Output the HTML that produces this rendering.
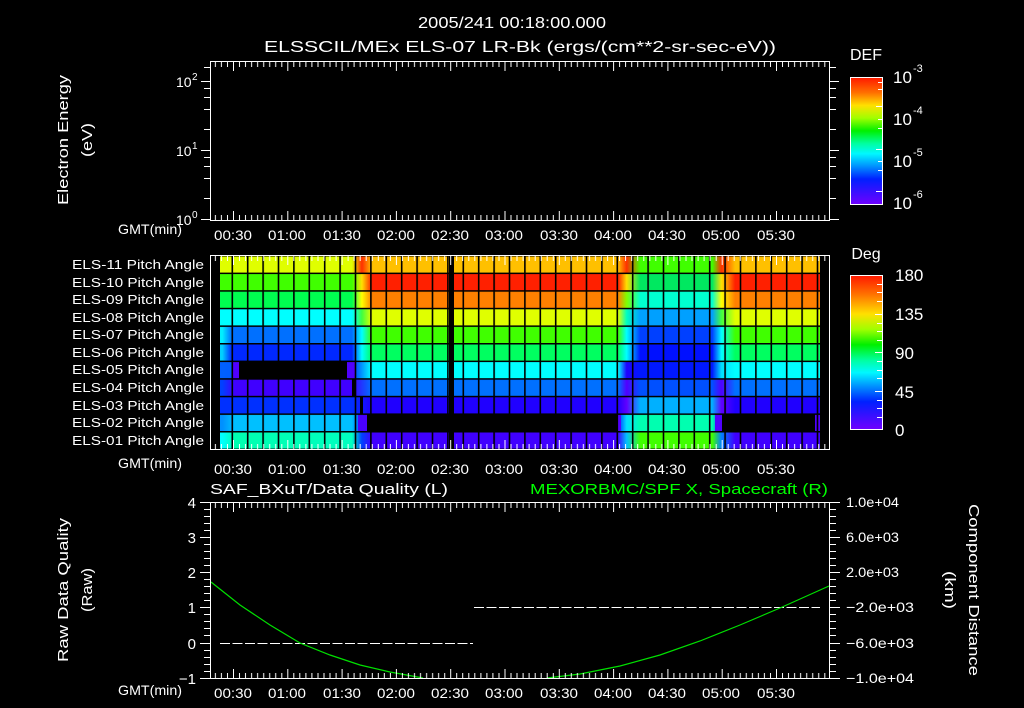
<!DOCTYPE html>
<html><head><meta charset="utf-8"><style>
html,body{margin:0;padding:0;background:#000;width:1024px;height:708px;overflow:hidden}
svg{display:block}
text{font-family:"Liberation Sans",sans-serif;fill:#fff}
</style></head><body>
<svg width="1024" height="708" viewBox="0 0 1024 708" xmlns="http://www.w3.org/2000/svg">
<defs>
<pattern id="tt" x="233" y="0" width="54.3" height="20" patternUnits="userSpaceOnUse">
<g stroke="#fff" stroke-width="1">
<line x1="0.5" y1="0" x2="0.5" y2="9"/>
<line x1="6.5" y1="0" x2="6.5" y2="5"/><line x1="12.5" y1="0" x2="12.5" y2="5"/><line x1="18.6" y1="0" x2="18.6" y2="5"/>
<line x1="24.6" y1="0" x2="24.6" y2="5"/><line x1="30.7" y1="0" x2="30.7" y2="5"/><line x1="36.7" y1="0" x2="36.7" y2="5"/>
<line x1="42.7" y1="0" x2="42.7" y2="5"/><line x1="48.8" y1="0" x2="48.8" y2="5"/>
</g></pattern>
<pattern id="tb" x="233" y="0" width="54.3" height="20" patternUnits="userSpaceOnUse">
<g stroke="#fff" stroke-width="1">
<line x1="0.5" y1="20" x2="0.5" y2="11"/>
<line x1="6.5" y1="20" x2="6.5" y2="15"/><line x1="12.5" y1="20" x2="12.5" y2="15"/><line x1="18.6" y1="20" x2="18.6" y2="15"/>
<line x1="24.6" y1="20" x2="24.6" y2="15"/><line x1="30.7" y1="20" x2="30.7" y2="15"/><line x1="36.7" y1="20" x2="36.7" y2="15"/>
<line x1="42.7" y1="20" x2="42.7" y2="15"/><line x1="48.8" y1="20" x2="48.8" y2="15"/>
</g></pattern>
<pattern id="gv" x="231.5" y="0" width="15.4" height="10" patternUnits="userSpaceOnUse">
<rect x="0" y="0" width="1.6" height="10" fill="#000"/></pattern>
<pattern id="gh" x="0" y="255" width="10" height="17.6" patternUnits="userSpaceOnUse">
<rect x="0" y="0" width="10" height="1.5" fill="#000"/></pattern>
<linearGradient id="cdef" x1="0" y1="0" x2="0" y2="1">
<stop offset="0" stop-color="#ff1800"/><stop offset="0.12" stop-color="#ff7000"/><stop offset="0.22" stop-color="#ffe000"/>
<stop offset="0.32" stop-color="#a0ff00"/><stop offset="0.42" stop-color="#00f000"/><stop offset="0.52" stop-color="#00ffa0"/>
<stop offset="0.6" stop-color="#00f8ff"/><stop offset="0.7" stop-color="#0090ff"/><stop offset="0.8" stop-color="#0020ff"/>
<stop offset="1" stop-color="#7000ff"/></linearGradient>
<linearGradient id="cdeg" x1="0" y1="0" x2="0" y2="1">
<stop offset="0" stop-color="#ff1800"/><stop offset="0.12" stop-color="#ff7000"/><stop offset="0.25" stop-color="#ffe000"/>
<stop offset="0.35" stop-color="#a0ff00"/><stop offset="0.45" stop-color="#00f000"/><stop offset="0.55" stop-color="#00ffa0"/>
<stop offset="0.63" stop-color="#00f8ff"/><stop offset="0.72" stop-color="#0090ff"/><stop offset="0.82" stop-color="#0020ff"/>
<stop offset="1" stop-color="#7000ff"/></linearGradient>
<linearGradient id="r0" gradientUnits="userSpaceOnUse" x1="210" y1="0" x2="830" y2="0"><stop offset="0.229" stop-color="#e0ff00"/><stop offset="0.245" stop-color="#ff3000"/><stop offset="0.261" stop-color="#ffc000"/><stop offset="0.658" stop-color="#ffc000"/><stop offset="0.672" stop-color="#ff3000"/><stop offset="0.694" stop-color="#40ff00"/><stop offset="0.81" stop-color="#40ff00"/><stop offset="0.825" stop-color="#ff3000"/><stop offset="0.847" stop-color="#ffc000"/></linearGradient>
<linearGradient id="r1" gradientUnits="userSpaceOnUse" x1="210" y1="0" x2="830" y2="0"><stop offset="0.229" stop-color="#40ff00"/><stop offset="0.245" stop-color="#ffe000"/><stop offset="0.261" stop-color="#ff2000"/><stop offset="0.658" stop-color="#ff2000"/><stop offset="0.672" stop-color="#ffe000"/><stop offset="0.694" stop-color="#00e860"/><stop offset="0.81" stop-color="#00e860"/><stop offset="0.825" stop-color="#ffe000"/><stop offset="0.847" stop-color="#ff2000"/></linearGradient>
<linearGradient id="r2" gradientUnits="userSpaceOnUse" x1="210" y1="0" x2="830" y2="0"><stop offset="0.229" stop-color="#00ff50"/><stop offset="0.245" stop-color="#ffff00"/><stop offset="0.261" stop-color="#ff8000"/><stop offset="0.658" stop-color="#ff8000"/><stop offset="0.672" stop-color="#80ff00"/><stop offset="0.694" stop-color="#00ffd0"/><stop offset="0.81" stop-color="#00ffd0"/><stop offset="0.825" stop-color="#ffff00"/><stop offset="0.847" stop-color="#ff8000"/></linearGradient>
<linearGradient id="r3" gradientUnits="userSpaceOnUse" x1="210" y1="0" x2="830" y2="0"><stop offset="0.229" stop-color="#00ffff"/><stop offset="0.245" stop-color="#40ff40"/><stop offset="0.261" stop-color="#e0ff00"/><stop offset="0.658" stop-color="#e0ff00"/><stop offset="0.672" stop-color="#00ffc0"/><stop offset="0.694" stop-color="#00a0ff"/><stop offset="0.81" stop-color="#00a0ff"/><stop offset="0.825" stop-color="#40ff40"/><stop offset="0.847" stop-color="#e0ff00"/></linearGradient>
<linearGradient id="r4" gradientUnits="userSpaceOnUse" x1="210" y1="0" x2="830" y2="0"><stop offset="0.02" stop-color="#00f0ff"/><stop offset="0.035" stop-color="#0070ff"/><stop offset="0.229" stop-color="#0070ff"/><stop offset="0.245" stop-color="#00ffff"/><stop offset="0.261" stop-color="#40ff00"/><stop offset="0.658" stop-color="#40ff00"/><stop offset="0.672" stop-color="#00ffff"/><stop offset="0.694" stop-color="#0040ff"/><stop offset="0.81" stop-color="#0040ff"/><stop offset="0.825" stop-color="#00ffff"/><stop offset="0.847" stop-color="#40ff00"/></linearGradient>
<linearGradient id="r5" gradientUnits="userSpaceOnUse" x1="210" y1="0" x2="830" y2="0"><stop offset="0.02" stop-color="#00d0ff"/><stop offset="0.035" stop-color="#0028ff"/><stop offset="0.229" stop-color="#0028ff"/><stop offset="0.245" stop-color="#00ffff"/><stop offset="0.261" stop-color="#00ff60"/><stop offset="0.658" stop-color="#00ff60"/><stop offset="0.672" stop-color="#00ffff"/><stop offset="0.694" stop-color="#0010ff"/><stop offset="0.81" stop-color="#0010ff"/><stop offset="0.825" stop-color="#00ffff"/><stop offset="0.847" stop-color="#00ff60"/></linearGradient>
<linearGradient id="r6" gradientUnits="userSpaceOnUse" x1="210" y1="0" x2="830" y2="0"><stop offset="0.02" stop-color="#0060ff"/><stop offset="0.229" stop-color="#0030ff"/><stop offset="0.261" stop-color="#00ffff"/><stop offset="0.658" stop-color="#00ffff"/><stop offset="0.672" stop-color="#2000ff"/><stop offset="0.694" stop-color="#0018ff"/><stop offset="0.81" stop-color="#0018ff"/><stop offset="0.825" stop-color="#00e0ff"/><stop offset="0.847" stop-color="#00ffff"/></linearGradient>
<linearGradient id="r7" gradientUnits="userSpaceOnUse" x1="210" y1="0" x2="830" y2="0"><stop offset="0.02" stop-color="#0040ff"/><stop offset="0.04" stop-color="#4000ff"/><stop offset="0.229" stop-color="#4000ff"/><stop offset="0.261" stop-color="#0070ff"/><stop offset="0.658" stop-color="#0070ff"/><stop offset="0.672" stop-color="#5000ff"/><stop offset="0.694" stop-color="#0050ff"/><stop offset="0.81" stop-color="#0050ff"/><stop offset="0.825" stop-color="#5000ff"/><stop offset="0.847" stop-color="#0070ff"/></linearGradient>
<linearGradient id="r8" gradientUnits="userSpaceOnUse" x1="210" y1="0" x2="830" y2="0"><stop offset="0.229" stop-color="#0030ff"/><stop offset="0.261" stop-color="#2000ff"/><stop offset="0.658" stop-color="#2000ff"/><stop offset="0.672" stop-color="#6000ff"/><stop offset="0.694" stop-color="#00b0ff"/><stop offset="0.81" stop-color="#00b0ff"/><stop offset="0.825" stop-color="#6000ff"/><stop offset="0.847" stop-color="#2000ff"/></linearGradient>
<linearGradient id="r9" gradientUnits="userSpaceOnUse" x1="210" y1="0" x2="830" y2="0"><stop offset="0.02" stop-color="#0090ff"/><stop offset="0.04" stop-color="#00c0ff"/><stop offset="0.229" stop-color="#00c0ff"/><stop offset="0.245" stop-color="#0040ff"/><stop offset="0.658" stop-color="#0030ff"/><stop offset="0.672" stop-color="#00e0ff"/><stop offset="0.694" stop-color="#00ffb0"/><stop offset="0.81" stop-color="#00ffb0"/><stop offset="0.825" stop-color="#0030ff"/></linearGradient>
<linearGradient id="r10" gradientUnits="userSpaceOnUse" x1="210" y1="0" x2="830" y2="0"><stop offset="0.02" stop-color="#00ffff"/><stop offset="0.04" stop-color="#00ffb0"/><stop offset="0.229" stop-color="#00ffc0"/><stop offset="0.245" stop-color="#0040ff"/><stop offset="0.261" stop-color="#4000ff"/><stop offset="0.658" stop-color="#4000ff"/><stop offset="0.672" stop-color="#00c0ff"/><stop offset="0.694" stop-color="#40ff00"/><stop offset="0.81" stop-color="#40ff00"/><stop offset="0.825" stop-color="#0080ff"/><stop offset="0.847" stop-color="#4000ff"/></linearGradient>
</defs>

<rect width="1024" height="708" fill="#000"/>

<text x="512" y="28" font-size="16" text-anchor="middle" textLength="188" lengthAdjust="spacingAndGlyphs">2005/241 00:18:00.000</text>
<text x="520" y="52" font-size="16" text-anchor="middle" textLength="512" lengthAdjust="spacingAndGlyphs">ELSSCIL/MEx ELS-07 LR-Bk  (ergs/(cm**2-sr-sec-eV))</text>

<!-- Panel 1 -->
<g transform="translate(0,62)"><rect x="210" y="0" width="619" height="20" fill="url(#tt)"/></g>
<g transform="translate(0,200)"><rect x="210" y="0" width="619" height="20" fill="url(#tb)"/></g>
<rect x="210.5" y="61.5" width="619" height="159" fill="none" stroke="#fff"/>
<g stroke="#fff">
<line x1="201" y1="81.5" x2="210" y2="81.5"/><line x1="201" y1="150.5" x2="210" y2="150.5"/><line x1="201" y1="219.5" x2="210" y2="219.5"/>
<line x1="204" y1="88.5" x2="210" y2="88.5"/><line x1="204" y1="97.5" x2="210" y2="97.5"/><line x1="204" y1="109.5" x2="210" y2="109.5"/><line x1="204" y1="129.5" x2="210" y2="129.5"/>
<line x1="204" y1="157.5" x2="210" y2="157.5"/><line x1="204" y1="166.5" x2="210" y2="166.5"/><line x1="204" y1="178.5" x2="210" y2="178.5"/><line x1="204" y1="198.5" x2="210" y2="198.5"/>
<line x1="204" y1="67.5" x2="210" y2="67.5"/>
<line x1="830" y1="81.5" x2="839" y2="81.5"/><line x1="830" y1="150.5" x2="839" y2="150.5"/><line x1="830" y1="219.5" x2="839" y2="219.5"/>
<line x1="830" y1="88.5" x2="836" y2="88.5"/><line x1="830" y1="97.5" x2="836" y2="97.5"/><line x1="830" y1="109.5" x2="836" y2="109.5"/><line x1="830" y1="129.5" x2="836" y2="129.5"/>
<line x1="830" y1="157.5" x2="836" y2="157.5"/><line x1="830" y1="166.5" x2="836" y2="166.5"/><line x1="830" y1="178.5" x2="836" y2="178.5"/><line x1="830" y1="198.5" x2="836" y2="198.5"/>
<line x1="830" y1="67.5" x2="836" y2="67.5"/>
</g>
<text x="176" y="87" font-size="14">10</text><text x="192" y="80" font-size="10">2</text>
<text x="176" y="156" font-size="14">10</text><text x="192" y="149" font-size="10">1</text>
<text x="176" y="225" font-size="14">10</text><text x="192" y="218" font-size="10">0</text>
<text transform="translate(68,140) rotate(-90)" font-size="15" text-anchor="middle" textLength="130" lengthAdjust="spacingAndGlyphs">Electron Energy</text>
<text transform="translate(92,140) rotate(-90)" font-size="15" text-anchor="middle" textLength="34" lengthAdjust="spacingAndGlyphs">(eV)</text>
<g font-size="14" text-anchor="middle">
<text x="150" y="234" textLength="64" lengthAdjust="spacingAndGlyphs">GMT(min)</text>
<text x="233" y="240" textLength="38" lengthAdjust="spacingAndGlyphs">00:30</text><text x="287" y="240" textLength="38" lengthAdjust="spacingAndGlyphs">01:00</text><text x="342" y="240" textLength="38" lengthAdjust="spacingAndGlyphs">01:30</text><text x="396" y="240" textLength="38" lengthAdjust="spacingAndGlyphs">02:00</text><text x="450" y="240" textLength="38" lengthAdjust="spacingAndGlyphs">02:30</text><text x="504" y="240" textLength="38" lengthAdjust="spacingAndGlyphs">03:00</text><text x="559" y="240" textLength="38" lengthAdjust="spacingAndGlyphs">03:30</text><text x="613" y="240" textLength="38" lengthAdjust="spacingAndGlyphs">04:00</text><text x="667" y="240" textLength="38" lengthAdjust="spacingAndGlyphs">04:30</text><text x="721" y="240" textLength="38" lengthAdjust="spacingAndGlyphs">05:00</text><text x="776" y="240" textLength="38" lengthAdjust="spacingAndGlyphs">05:30</text>
</g>
<text x="866" y="60" font-size="16" text-anchor="middle">DEF</text>
<rect x="850.5" y="77.5" width="32" height="127" fill="url(#cdef)" stroke="#fff"/>
<g stroke="#fff"><line x1="878" y1="82.5" x2="882" y2="82.5"/><line x1="878" y1="89.5" x2="882" y2="89.5"/><line x1="876" y1="106.5" x2="882" y2="106.5"/><line x1="878" y1="119.5" x2="882" y2="119.5"/><line x1="878" y1="128.5" x2="882" y2="128.5"/><line x1="876" y1="149.5" x2="882" y2="149.5"/><line x1="878" y1="161.5" x2="882" y2="161.5"/><line x1="878" y1="170.5" x2="882" y2="170.5"/><line x1="876" y1="191.5" x2="882" y2="191.5"/></g>
<g font-size="17"><text x="893" y="83">10</text><text x="893" y="125">10</text><text x="893" y="167">10</text><text x="893" y="209">10</text></g>
<g font-size="11"><text x="913" y="72">-3</text><text x="913" y="114">-4</text><text x="913" y="156">-5</text><text x="913" y="198">-6</text></g>

<!-- Panel 2 -->
<rect x="220" y="256" width="600" height="17.6" fill="url(#r0)"/>
<rect x="220" y="273.6" width="600" height="17.6" fill="url(#r1)"/>
<rect x="220" y="291.2" width="600" height="17.6" fill="url(#r2)"/>
<rect x="220" y="308.8" width="600" height="17.6" fill="url(#r3)"/>
<rect x="220" y="326.4" width="600" height="17.6" fill="url(#r4)"/>
<rect x="220" y="344" width="600" height="17.6" fill="url(#r5)"/>
<rect x="220" y="361.6" width="600" height="17.6" fill="url(#r6)"/>
<rect x="220" y="379.2" width="600" height="17.6" fill="url(#r7)"/>
<rect x="220" y="396.8" width="600" height="17.6" fill="url(#r8)"/>
<rect x="220" y="414.4" width="600" height="17.6" fill="url(#r9)"/>
<rect x="220" y="432" width="600" height="17.6" fill="url(#r10)"/>
<rect x="232" y="361.6" width="7" height="17.6" fill="#5000ff"/>
<rect x="239" y="361.6" width="108" height="17.6" fill="#000"/>
<rect x="347" y="361.6" width="8" height="17.6" fill="#5000ff"/>
<rect x="352" y="379.2" width="4" height="17.6" fill="#000"/>
<rect x="360" y="396.8" width="3" height="17.6" fill="#000"/>
<rect x="358" y="414.4" width="9" height="17.6" fill="#4a00ff"/>
<rect x="367" y="414.4" width="251" height="17.6" fill="#000"/>
<rect x="618" y="414.4" width="3" height="17.6" fill="#5000ff"/>
<rect x="715" y="414.4" width="7" height="17.6" fill="#5000ff"/>
<rect x="722" y="414.4" width="93" height="17.6" fill="#000"/>
<rect x="815" y="414.4" width="5" height="17.6" fill="#5000ff"/>
<rect x="220" y="255" width="600" height="195" fill="url(#gv)"/>
<rect x="220" y="255" width="600" height="195" fill="url(#gh)"/>
<rect x="449" y="255" width="5" height="195" fill="#000"/>
<g transform="translate(0,256)"><rect x="210" y="0" width="619" height="20" fill="url(#tt)"/></g>
<g transform="translate(0,429)"><rect x="210" y="0" width="619" height="20" fill="url(#tb)"/></g>
<rect x="210.5" y="255.5" width="619" height="194" fill="none" stroke="#fff"/>
<g font-size="13" text-anchor="end">
<text x="204" y="269" textLength="132" lengthAdjust="spacingAndGlyphs">ELS-11 Pitch Angle</text><text x="204" y="287" textLength="132" lengthAdjust="spacingAndGlyphs">ELS-10 Pitch Angle</text><text x="204" y="304" textLength="132" lengthAdjust="spacingAndGlyphs">ELS-09 Pitch Angle</text><text x="204" y="322" textLength="132" lengthAdjust="spacingAndGlyphs">ELS-08 Pitch Angle</text><text x="204" y="339" textLength="132" lengthAdjust="spacingAndGlyphs">ELS-07 Pitch Angle</text><text x="204" y="357" textLength="132" lengthAdjust="spacingAndGlyphs">ELS-06 Pitch Angle</text><text x="204" y="374" textLength="132" lengthAdjust="spacingAndGlyphs">ELS-05 Pitch Angle</text><text x="204" y="392" textLength="132" lengthAdjust="spacingAndGlyphs">ELS-04 Pitch Angle</text><text x="204" y="410" textLength="132" lengthAdjust="spacingAndGlyphs">ELS-03 Pitch Angle</text><text x="204" y="427" textLength="132" lengthAdjust="spacingAndGlyphs">ELS-02 Pitch Angle</text><text x="204" y="445" textLength="132" lengthAdjust="spacingAndGlyphs">ELS-01 Pitch Angle</text>
</g>
<g font-size="14" text-anchor="middle">
<text x="150" y="468" textLength="64" lengthAdjust="spacingAndGlyphs">GMT(min)</text>
<text x="233" y="474" textLength="38" lengthAdjust="spacingAndGlyphs">00:30</text><text x="287" y="474" textLength="38" lengthAdjust="spacingAndGlyphs">01:00</text><text x="342" y="474" textLength="38" lengthAdjust="spacingAndGlyphs">01:30</text><text x="396" y="474" textLength="38" lengthAdjust="spacingAndGlyphs">02:00</text><text x="450" y="474" textLength="38" lengthAdjust="spacingAndGlyphs">02:30</text><text x="504" y="474" textLength="38" lengthAdjust="spacingAndGlyphs">03:00</text><text x="559" y="474" textLength="38" lengthAdjust="spacingAndGlyphs">03:30</text><text x="613" y="474" textLength="38" lengthAdjust="spacingAndGlyphs">04:00</text><text x="667" y="474" textLength="38" lengthAdjust="spacingAndGlyphs">04:30</text><text x="721" y="474" textLength="38" lengthAdjust="spacingAndGlyphs">05:00</text><text x="776" y="474" textLength="38" lengthAdjust="spacingAndGlyphs">05:30</text>
</g>
<text x="866" y="259" font-size="16" text-anchor="middle">Deg</text>
<rect x="850.5" y="275.5" width="32" height="154" fill="url(#cdeg)" stroke="#fff"/>
<g stroke="#fff"><line x1="877" y1="284.5" x2="882" y2="284.5"/><line x1="877" y1="292.5" x2="882" y2="292.5"/><line x1="877" y1="301.5" x2="882" y2="301.5"/><line x1="875" y1="314.5" x2="882" y2="314.5"/><line x1="877" y1="323.5" x2="882" y2="323.5"/><line x1="877" y1="331.5" x2="882" y2="331.5"/><line x1="877" y1="340.5" x2="882" y2="340.5"/><line x1="875" y1="352.5" x2="882" y2="352.5"/><line x1="877" y1="361.5" x2="882" y2="361.5"/><line x1="877" y1="370.5" x2="882" y2="370.5"/><line x1="877" y1="378.5" x2="882" y2="378.5"/><line x1="875" y1="391.5" x2="882" y2="391.5"/><line x1="877" y1="400.5" x2="882" y2="400.5"/><line x1="877" y1="408.5" x2="882" y2="408.5"/><line x1="877" y1="417.5" x2="882" y2="417.5"/></g>
<g font-size="17"><text x="895" y="281">180</text><text x="895" y="320">135</text><text x="895" y="359">90</text><text x="895" y="398">45</text><text x="895" y="436">0</text></g>

<!-- Panel 3 -->
<text x="210" y="494" font-size="15" textLength="238" lengthAdjust="spacingAndGlyphs">SAF_BXuT/Data Quality (L)</text>
<text x="828" y="494" font-size="15" text-anchor="end" style="fill:#00ff00" textLength="298" lengthAdjust="spacingAndGlyphs">MEXORBMC/SPF X, Spacecraft (R)</text>
<line x1="220" y1="643.5" x2="473" y2="643.5" stroke="#fff" stroke-dasharray="10 2.5"/>
<line x1="474" y1="607.5" x2="820" y2="607.5" stroke="#fff" stroke-dasharray="10 2.5"/>
<polyline fill="none" stroke="#00e000" stroke-width="1.2" points="211,582 240,605 270,625 300,643 330,655 360,665 390,672 423,678"/>
<polyline fill="none" stroke="#00e000" stroke-width="1.2" points="547,678 580,674 620,666 660,655 700,641 740,625 780,608 829,586"/>
<g transform="translate(0,503)"><rect x="210" y="0" width="619" height="20" fill="url(#tt)"/></g>
<g transform="translate(0,658)"><rect x="210" y="0" width="619" height="20" fill="url(#tb)"/></g>
<rect x="210.5" y="502.5" width="619" height="176" fill="none" stroke="#fff"/>
<g stroke="#fff">
<line x1="200" y1="502.5" x2="210" y2="502.5"/><line x1="200" y1="537.5" x2="210" y2="537.5"/><line x1="200" y1="572.5" x2="210" y2="572.5"/><line x1="200" y1="607.5" x2="210" y2="607.5"/><line x1="200" y1="643.5" x2="210" y2="643.5"/><line x1="200" y1="678.5" x2="210" y2="678.5"/>
<line x1="830" y1="502.5" x2="840" y2="502.5"/><line x1="830" y1="537.5" x2="840" y2="537.5"/><line x1="830" y1="572.5" x2="840" y2="572.5"/><line x1="830" y1="607.5" x2="840" y2="607.5"/><line x1="830" y1="643.5" x2="840" y2="643.5"/><line x1="830" y1="678.5" x2="840" y2="678.5"/>
<path d="M204 509.5h6M204 516.5h6M204 523.5h6M204 530.5h6M204 544.5h6M204 551.5h6M204 558.5h6M204 565.5h6M204 579.5h6M204 586.5h6M204 593.5h6M204 600.5h6M204 614.5h6M204 621.5h6M204 628.5h6M204 635.5h6M204 650.5h6M204 657.5h6M204 664.5h6M204 671.5h6"/>
<path d="M830 509.5h6M830 516.5h6M830 523.5h6M830 530.5h6M830 544.5h6M830 551.5h6M830 558.5h6M830 565.5h6M830 579.5h6M830 586.5h6M830 593.5h6M830 600.5h6M830 614.5h6M830 621.5h6M830 628.5h6M830 635.5h6M830 650.5h6M830 657.5h6M830 664.5h6M830 671.5h6"/>
</g>
<g font-size="15" text-anchor="end"><text x="196" y="508">4</text><text x="196" y="543">3</text><text x="196" y="578">2</text><text x="196" y="613">1</text><text x="196" y="649">0</text><text x="196" y="684">−1</text></g>
<g font-size="14"><text x="846" y="507" textLength="53" lengthAdjust="spacingAndGlyphs">1.0e+04</text><text x="846" y="542" textLength="53" lengthAdjust="spacingAndGlyphs">6.0e+03</text><text x="846" y="577" textLength="53" lengthAdjust="spacingAndGlyphs">2.0e+03</text><text x="846" y="612" textLength="68" lengthAdjust="spacingAndGlyphs">−2.0e+03</text><text x="846" y="648" textLength="68" lengthAdjust="spacingAndGlyphs">−6.0e+03</text><text x="846" y="683" textLength="68" lengthAdjust="spacingAndGlyphs">−1.0e+04</text></g>
<text transform="translate(68,590) rotate(-90)" font-size="15" text-anchor="middle" textLength="144" lengthAdjust="spacingAndGlyphs">Raw Data Quality</text>
<text transform="translate(92,590) rotate(-90)" font-size="15" text-anchor="middle" textLength="44" lengthAdjust="spacingAndGlyphs">(Raw)</text>
<text transform="translate(969,590) rotate(90)" font-size="15" text-anchor="middle" textLength="172" lengthAdjust="spacingAndGlyphs">Component Distance</text>
<text transform="translate(945,590) rotate(90)" font-size="15" text-anchor="middle" textLength="38" lengthAdjust="spacingAndGlyphs">(km)</text>
<g font-size="14" text-anchor="middle">
<text x="150" y="695" textLength="64" lengthAdjust="spacingAndGlyphs">GMT(min)</text>
<text x="233" y="698" textLength="38" lengthAdjust="spacingAndGlyphs">00:30</text><text x="287" y="698" textLength="38" lengthAdjust="spacingAndGlyphs">01:00</text><text x="342" y="698" textLength="38" lengthAdjust="spacingAndGlyphs">01:30</text><text x="396" y="698" textLength="38" lengthAdjust="spacingAndGlyphs">02:00</text><text x="450" y="698" textLength="38" lengthAdjust="spacingAndGlyphs">02:30</text><text x="504" y="698" textLength="38" lengthAdjust="spacingAndGlyphs">03:00</text><text x="559" y="698" textLength="38" lengthAdjust="spacingAndGlyphs">03:30</text><text x="613" y="698" textLength="38" lengthAdjust="spacingAndGlyphs">04:00</text><text x="667" y="698" textLength="38" lengthAdjust="spacingAndGlyphs">04:30</text><text x="721" y="698" textLength="38" lengthAdjust="spacingAndGlyphs">05:00</text><text x="776" y="698" textLength="38" lengthAdjust="spacingAndGlyphs">05:30</text>
</g>
</svg>
</body></html>
